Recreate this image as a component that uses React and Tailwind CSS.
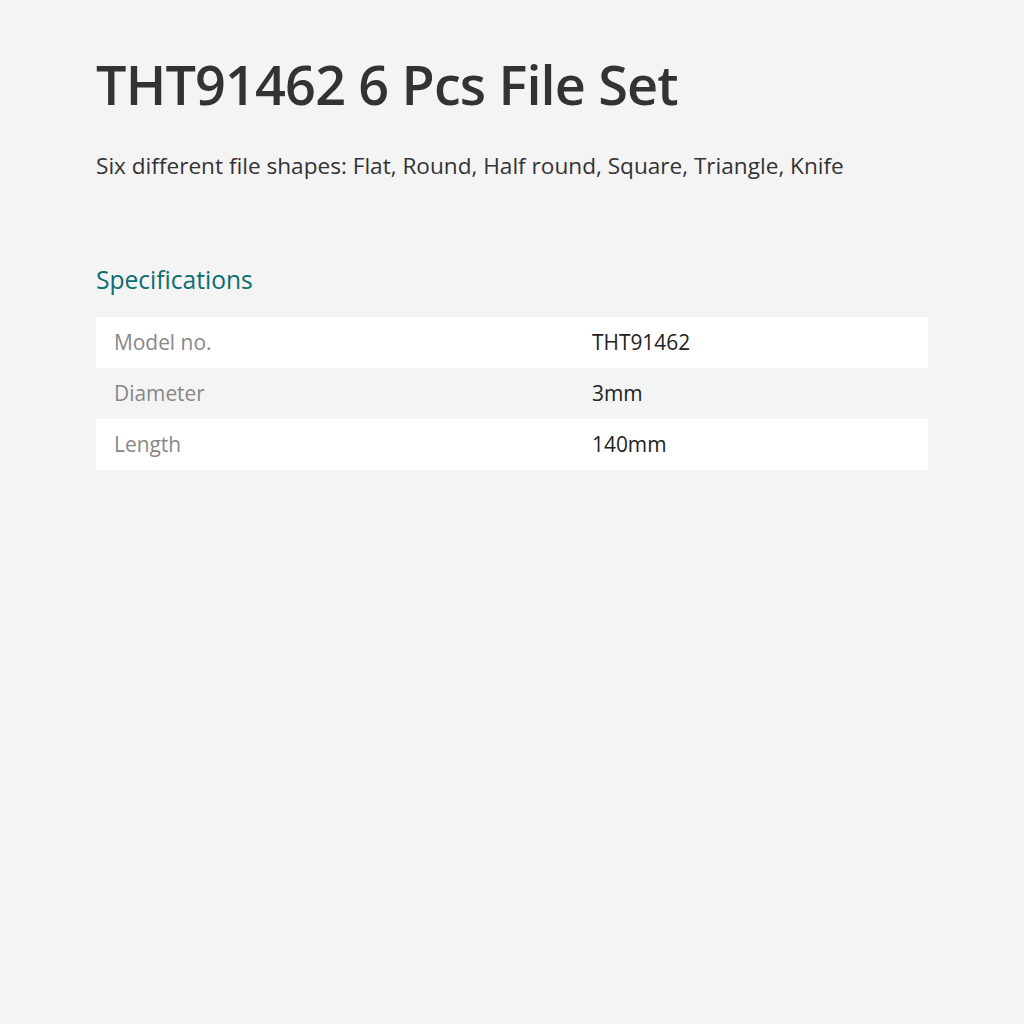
import React from 'react';

const specs = [
    { label: 'Model no.', value: 'THT91462' },
    { label: 'Diameter', value: '3mm' },
    { label: 'Length', value: '140mm' },
];

export default function App() {
    return (
        <div className="min-h-screen bg-[#f4f4f4] px-[96px] pt-[50px] font-['Open_Sans',sans-serif]">
            <h1 className="text-[54px] leading-[68px] font-semibold text-[#333] tracking-[-0.85px]">
                THT91462 6 Pcs File Set
            </h1>
            <p className="mt-[32px] text-[22.6px] leading-[32px] text-[#333]">
                Six different file shapes: Flat, Round, Half round, Square, Triangle, Knife
            </p>

            {/* Specifications */}
            <h2 className="mt-[81px] text-[24.6px] leading-[34px] text-[#0b6e70]">Specifications</h2>
            <div className="mt-[20px] w-[832px]">
                {specs.map((s, i) => (
                    <div
                        key={s.label}
                        className={`flex h-[51px] items-center text-[20.9px] ${i % 2 === 0 ? 'bg-white' : 'bg-transparent'}`}
                    >
                        <div className="w-[496px] pl-[18px] text-[#888]">{s.label}</div>
                        <div className="text-[#222]">{s.value}</div>
                    </div>
                ))}
            </div>
        </div>
    );
}
